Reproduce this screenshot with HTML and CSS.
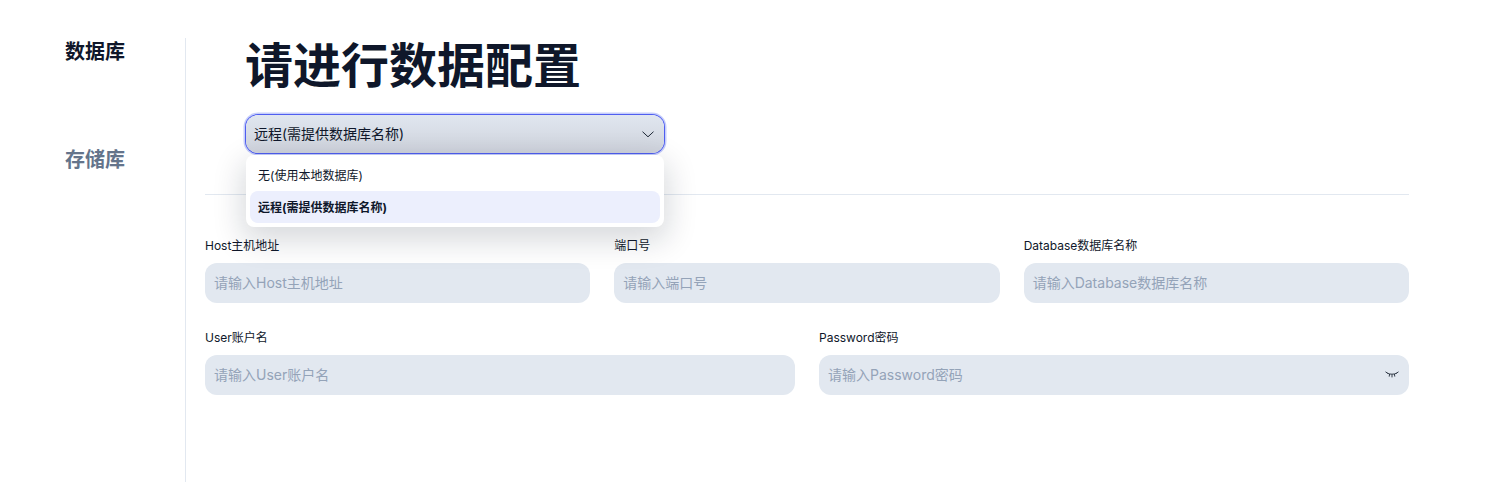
FILE: index.html
```html
<!DOCTYPE html>
<html lang="zh">
<head>
<meta charset="utf-8">
<title>数据配置</title>
<link rel="stylesheet" href="styles.css">
</head>
<body>
<div class="page">
  <nav class="side">
    <a class="nav-item active">数据库</a>
    <a class="nav-item">存储库</a>
  </nav>
  <main class="main">
    <section class="head">
      <h1 class="title">请进行数据配置</h1>
      <div class="select-wrap">
        <div class="select">
          <span>远程(需提供数据库名称)</span>
          <svg class="chev" width="12" height="7" viewBox="0 0 12 7"><path d="M.5.7L6 5.8 11.5.7" fill="none" stroke="#1f2937" stroke-width="1"/></svg>
        </div>
        <ul class="menu">
          <li class="opt">无(使用本地数据库)</li>
          <li class="opt current">远程(需提供数据库名称)</li>
        </ul>
      </div>
    </section>
    <div class="form">
      <div class="row three">
        <label class="field"><span class="label">Host主机地址</span><span class="input">请输入Host主机地址</span></label>
        <label class="field"><span class="label">端口号</span><span class="input">请输入端口号</span></label>
        <label class="field"><span class="label">Database数据库名称</span><span class="input">请输入Database数据库名称</span></label>
      </div>
      <div class="row two">
        <label class="field"><span class="label">User账户名</span><span class="input">请输入User账户名</span></label>
        <label class="field"><span class="label">Password密码</span><span class="input">请输入Password密码
          <svg class="eye" width="14" height="7" viewBox="0 0 14 7"><path d="M2 2C4.5 3.6 9.5 3.6 12 2M.5.8L2.5 2.2M13.5.8L11.5 2.2M4.6 3L4.2 5.6M7 3.4V6.4M9.4 3L9.8 5.6" fill="none" stroke="#1f2937" stroke-width=".9"/></svg>
        </span></label>
      </div>
    </div>
  </main>
</div>
</body>
</html>
```
FILE: styles.css
```css
* { box-sizing: border-box; }
html, body { margin: 0; height: 100%; background: #fff; overflow: hidden; }
body { font-family: Inter, "Noto Sans CJK SC", sans-serif; color: #0f172a; }
.page { display: flex; height: 482px; padding: 38px 93px 0 0; }
.side { width: 186px; flex: none; border-right: 1px solid #e2e8f0; padding: 0 0 0 65px; display: flex; flex-direction: column; gap: 82px; }
.nav-item { font-size: 20px; line-height: 24px; height: 24px; margin-top: 2px; font-weight: 700; color: #64748b; }
.nav-item.active { color: #0f172a; }
.main { flex: 1; padding-left: 19px; min-width: 0; }
.head { padding-left: 41px; height: 157px; border-bottom: 1px solid #e2e8f0; }
.title { margin: 0 0 0 -1px; font-size: 48px; line-height: 56px; font-weight: 700; color: #0f172a; height: 58px; }
.select-wrap { position: relative; width: 418px; margin-top: 19px; }
.select { height: 38px; border-radius: 12px; background: linear-gradient(#e0e6ef, #cfd3dc); box-shadow: 0 0 0 1px #4f5ef0, 0 0 0 2.5px #c6cefb; display: flex; align-items: center; justify-content: space-between; padding: 0 10px 0 8px; font-size: 14px; color: #0f172a; }
.select span { margin-bottom: 2px; }
.menu { position: absolute; z-index: 2; left: 0; right: 0; top: 40px; margin: 0; padding: 4px; list-style: none; background: #fff; border-radius: 8px; box-shadow: 0 10px 30px 4px rgba(15, 23, 42, .16); }
.opt { height: 32px; line-height: 34px; padding: 0 8px; font-size: 12px; border-radius: 8px; color: #0f172a; }
.opt.current { background: #eceffd; font-weight: 700; }
.form { padding-top: 42px; display: flex; flex-direction: column; gap: 26px; }
.row { display: grid; gap: 24px; }
.three { grid-template-columns: repeat(3, 1fr); }
.two { grid-template-columns: repeat(2, 1fr); }
.field { display: flex; flex-direction: column; gap: 8px; min-width: 0; }
.label { font-size: 12px; line-height: 18px; height: 18px; color: #0f172a; }
.input { height: 40px; border-radius: 12px; background: #e2e8f0; color: #94a3b8; font-size: 14px; padding: 0 10px 2px 9px; display: flex; align-items: center; justify-content: space-between; }
```
